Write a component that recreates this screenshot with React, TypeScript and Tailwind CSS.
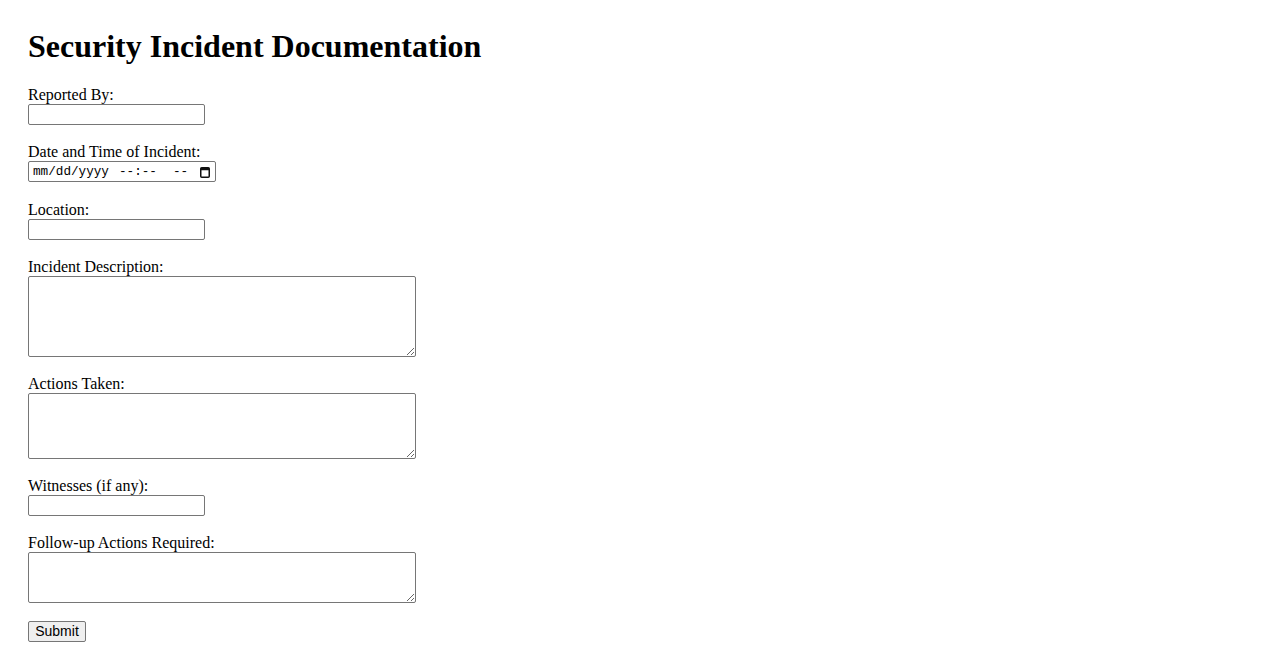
import React from "react";

const labelCls = "block h-[18px] leading-[18px] text-[16px]";
const inputCls =
  "block w-[177px] h-[21px] border border-[#767676] rounded-[2px] bg-white px-[2px] py-[1px] text-[13.33px] font-['Liberation_Sans',Arial,sans-serif]";
const areaCls =
  "block w-[388px] border border-[#767676] rounded-[2px] bg-white px-[2px] py-[2px] text-[13.33px] font-['Liberation_Mono',monospace] resize";

function DateTimeField() {
  return (
    <div
      role="textbox"
      aria-label="Date and Time of Incident"
      className="flex items-center w-[188px] h-[21px] border border-[#767676] rounded-[2px] bg-white pl-[4px] pr-[5px] mb-[19px] font-['Liberation_Mono','DejaVu_Sans_Mono',monospace] text-[12.67px] leading-[19px] text-black"
    >
      <span className="whitespace-pre">mm/dd/yyyy</span>
      <span className="whitespace-pre ml-[10px]">--:--</span>
      <span className="whitespace-pre ml-[16px]">--</span>
      <svg className="ml-auto" width="10" height="12" viewBox="0 0 10 12" aria-hidden="true">
        <rect x="0.75" y="1.75" width="8.5" height="9.5" rx="1" fill="none" stroke="#111" strokeWidth="1.5" />
        <rect x="0.75" y="1.75" width="8.5" height="2.5" fill="#111" />
      </svg>
    </div>
  );
}

export default function App() {
  return (
    <div className="min-h-[650px] bg-white text-black font-['Liberation_Serif','Times_New_Roman',serif] pl-[28px] pt-[28px]">
      <h1 className="text-[32px] font-bold leading-[37px] h-[37px] mb-[21px]">
        Security Incident Documentation
      </h1>
      <form className="flex flex-col" onSubmit={(e) => e.preventDefault()}>
        <label className={labelCls} htmlFor="reported">Reported By:</label>
        <input id="reported" type="text" className={inputCls + " mb-[18px]"} />

        <label className={labelCls}>Date and Time of Incident:</label>
        <DateTimeField />

        <label className={labelCls} htmlFor="loc">Location:</label>
        <input id="loc" type="text" className={inputCls + " mb-[18px]"} />

        <label className={labelCls} htmlFor="desc">Incident Description:</label>
        <textarea id="desc" className={areaCls + " h-[81px] mb-[18px]"} />

        <label className={labelCls} htmlFor="act">Actions Taken:</label>
        <textarea id="act" className={areaCls + " h-[66px] mb-[18px]"} />

        <label className={labelCls} htmlFor="wit">Witnesses (if any):</label>
        <input id="wit" type="text" className={inputCls + " mb-[18px]"} />

        <label className={labelCls} htmlFor="fu">Follow-up Actions Required:</label>
        <textarea id="fu" className={areaCls + " h-[51px] mb-[18px]"} />

        <button
          type="submit"
          className="block self-start h-[21px] w-[58px] border border-[#767676] rounded-[2px] bg-[#efefef] px-[6px] text-[14px] leading-[19px] font-['Liberation_Sans',Arial,sans-serif] text-black"
        >
          Submit
        </button>
      </form>
    </div>
  );
}
